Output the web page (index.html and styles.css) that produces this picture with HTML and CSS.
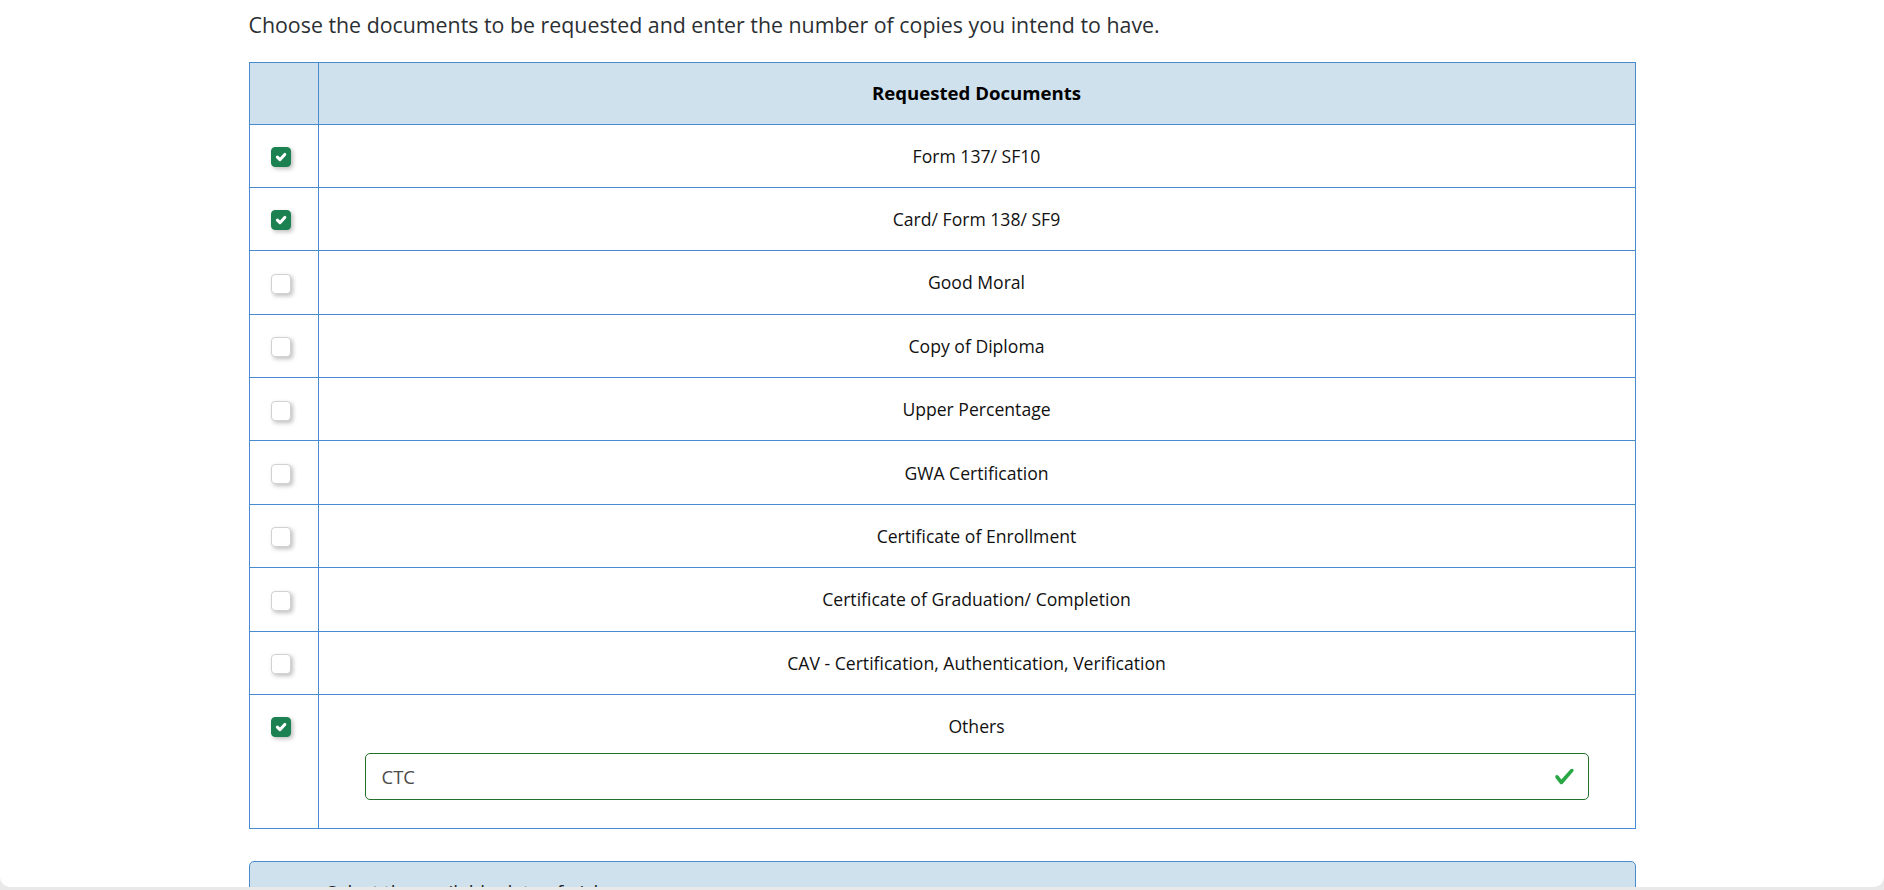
FILE: index.html
```html
<!DOCTYPE html>
<html lang="en">
<head>
<meta charset="utf-8">
<title>Requested Documents</title>
<link rel="stylesheet" href="styles.css">
</head>
<body>
<div class="page">
  <div class="container">
    <p class="intro">Choose the documents to be requested and enter the number of copies you intend to have.</p>
    <table class="docs">
      <colgroup><col class="col-check-w"><col></colgroup>
      <thead>
        <tr><th class="col-check"></th><th class="col-name">Requested Documents</th></tr>
      </thead>
      <tbody>
        <tr><td class="col-check"><span class="cb checked"><svg viewBox="0 0 10 10"><path d="M3 5.1 4.4 6.5 7.1 3.6" /></svg></span></td><td class="col-name">Form 137/ SF10</td></tr>
        <tr><td class="col-check"><span class="cb checked"><svg viewBox="0 0 10 10"><path d="M3 5.1 4.4 6.5 7.1 3.6" /></svg></span></td><td class="col-name">Card/ Form 138/ SF9</td></tr>
        <tr><td class="col-check"><span class="cb"></span></td><td class="col-name">Good Moral</td></tr>
        <tr><td class="col-check"><span class="cb"></span></td><td class="col-name">Copy of Diploma</td></tr>
        <tr><td class="col-check"><span class="cb"></span></td><td class="col-name">Upper Percentage</td></tr>
        <tr><td class="col-check"><span class="cb"></span></td><td class="col-name">GWA Certification</td></tr>
        <tr><td class="col-check"><span class="cb"></span></td><td class="col-name">Certificate of Enrollment</td></tr>
        <tr><td class="col-check"><span class="cb"></span></td><td class="col-name">Certificate of Graduation/ Completion</td></tr>
        <tr><td class="col-check"><span class="cb"></span></td><td class="col-name">CAV - Certification, Authentication, Verification</td></tr>
        <tr class="others-row"><td class="col-check"><span class="cb checked"><svg viewBox="0 0 10 10"><path d="M3 5.1 4.4 6.5 7.1 3.6" /></svg></span></td><td class="col-name">
          <div>Others</div>
          <div class="valid-input">
            <span class="value">CTC</span>
            <svg class="valid-icon" viewBox="0 0 8 8"><path d="M2.3 6.73.6 4.53c-.4-1.04.46-1.4 1.1-.8l1.1 1.4 3.4-3.8c.6-.63 1.6-.27 1.2.7l-4 4.6c-.43.5-.8.4-1.1.1z"/></svg>
          </div>
        </td></tr>
      </tbody>
    </table>
    <div class="next-card">Select the available date of pickup</div>
  </div>
</div>
</body>
</html>
```

FILE: styles.css
```css
html, body {
  margin: 0;
  padding: 0;
}
body {
  background: #e9e9e9;
  font-family: "Open Sans", "Noto Sans", sans-serif;
  color: #212529;
}
.page {
  height: 887px;
  overflow: hidden;
  background: #ffffff;
  border-radius: 0 0 10px 10px;
}
.container {
  width: 1387px;
  margin: 0 auto;
}
.intro {
  margin: 10px 0 0 0;
  font-size: 21.35px;
  line-height: 30px;
  color: #2b2f33;
}
.docs {
  margin-top: 22px;
  width: 100%;
  table-layout: fixed;
  border-collapse: collapse;
  font-size: 17.6px;
  line-height: 30px;
}
.col-check-w {
  width: 69px;
}
.docs th, .docs td {
  border: 1px solid #4a8bd0;
}
.docs th {
  background: #cfe1ec;
  font-weight: 700;
  color: #000;
  padding: 15.25px 0;
  font-size: 18.6px;
}
.docs td {
  padding: 16.2px 0;
  text-align: center;
  vertical-align: top;
  color: #111;
}
.docs td.col-check {
  text-align: left;
  padding: 22.5px 0 0 21.5px;
}
.cb {
  display: block;
  width: 20px;
  height: 20px;
  box-sizing: border-box;
  border-radius: 4px;
  border: 1px solid #d2d2d2;
  background: #fff;
  box-shadow: 2px 2px 4px rgba(0, 0, 0, 0.25);
}
.cb.checked {
  background: #1b8150;
  border-color: #1b8150;
}
.cb svg {
  display: block;
  width: 18px;
  height: 18px;
}
.cb svg path {
  fill: none;
  stroke: #fff;
  stroke-width: 1.7;
  stroke-linecap: round;
  stroke-linejoin: round;
}
.others-row td.col-name {
  padding-bottom: 28px;
}
.valid-input {
  display: flex;
  align-items: center;
  justify-content: space-between;
  height: 47px;
  box-sizing: border-box;
  margin: 12px 46px 0 46px;
  padding: 0 13px 0 16px;
  border: 1px solid #22702a;
  border-radius: 5px;
  text-align: left;
  color: #4a4a4a;
  font-size: 18.5px;
}
.valid-icon {
  width: 21px;
  height: 21px;
  fill: #28a745;
}
.next-card {
  margin-top: 32px;
  height: 80px;
  box-sizing: border-box;
  padding: 15px 0 0 77px;
  background: #cfe1ec;
  border: 1px solid #4a8bd0;
  border-radius: 5px;
  font-size: 19px;
  line-height: 30px;
}
```
